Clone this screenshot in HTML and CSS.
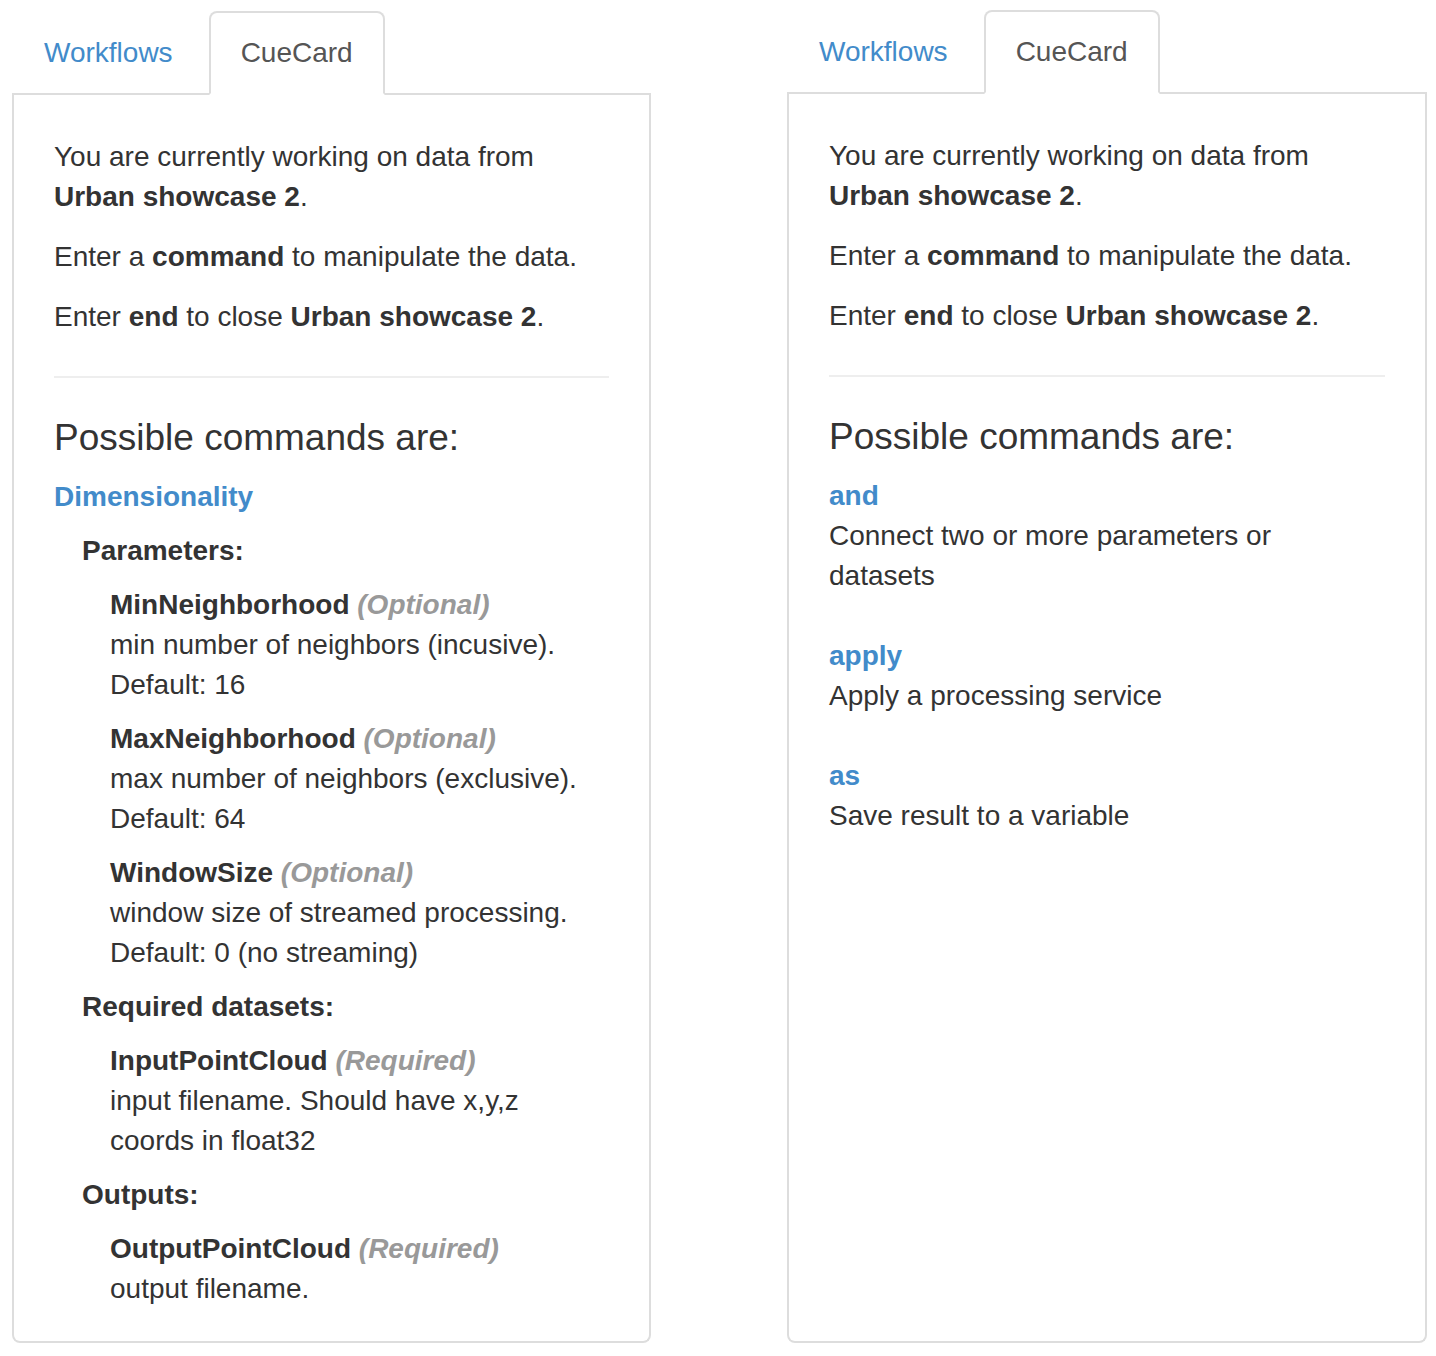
FILE: index.html
```html
<!DOCTYPE html>
<html lang="en">
<head>
<meta charset="utf-8">
<title>CueCard</title>
<link rel="stylesheet" href="styles.css">
</head>
<body>
<div class="page">
  <div class="col">
    <ul class="tabs">
      <li class="tab"><a href="#">Workflows</a></li>
      <li class="tab active"><a href="#">CueCard</a></li>
    </ul>
    <div class="panel panel-left">
      <p>You are currently working on data from <b>Urban showcase 2</b>.</p>
      <p>Enter a <b>command</b> to manipulate the data.</p>
      <p>Enter <b>end</b> to close <b>Urban showcase 2</b>.</p>
      <hr>
      <h3>Possible commands are:</h3>
      <div class="cmds">
        <a class="cmd" href="#">Dimensionality</a>
        <div class="group">
          <div class="group-title">Parameters:</div>
          <div class="param">
            <div><b>MinNeighborhood</b> <i class="tag">(Optional)</i></div>
            <div>min number of neighbors (incusive).</div>
            <div>Default: 16</div>
          </div>
          <div class="param">
            <div><b>MaxNeighborhood</b> <i class="tag">(Optional)</i></div>
            <div>max number of neighbors (exclusive).</div>
            <div>Default: 64</div>
          </div>
          <div class="param">
            <div><b>WindowSize</b> <i class="tag">(Optional)</i></div>
            <div>window size of streamed processing.</div>
            <div>Default: 0 (no streaming)</div>
          </div>
        </div>
        <div class="group">
          <div class="group-title">Required datasets:</div>
          <div class="param">
            <div><b>InputPointCloud</b> <i class="tag">(Required)</i></div>
            <div>input filename. Should have x,y,z<br>coords in float32</div>
          </div>
        </div>
        <div class="group">
          <div class="group-title">Outputs:</div>
          <div class="param">
            <div><b>OutputPointCloud</b> <i class="tag">(Required)</i></div>
            <div>output filename.</div>
          </div>
        </div>
      </div>
    </div>
  </div>
  <div class="col col-shift">
    <ul class="tabs">
      <li class="tab"><a href="#">Workflows</a></li>
      <li class="tab active"><a href="#">CueCard</a></li>
    </ul>
    <div class="panel">
      <p>You are currently working on data from <b>Urban showcase 2</b>.</p>
      <p>Enter a <b>command</b> to manipulate the data.</p>
      <p>Enter <b>end</b> to close <b>Urban showcase 2</b>.</p>
      <hr>
      <h3>Possible commands are:</h3>
      <div class="list">
        <div class="entry">
          <a class="cmd" href="#">and</a>
          <div>Connect two or more parameters or<br>datasets</div>
        </div>
        <div class="entry">
          <a class="cmd" href="#">apply</a>
          <div>Apply a processing service</div>
        </div>
        <div class="entry">
          <a class="cmd" href="#">as</a>
          <div>Save result to a variable</div>
        </div>
      </div>
    </div>
  </div>
</div>
</body>
</html>
```

FILE: styles.css
```css
* { box-sizing: border-box; }
html, body { margin: 0; padding: 0; background: #fff; }
body {
  font-family: "Liberation Sans", Arial, Helvetica, sans-serif;
  font-size: 28px;
  line-height: 40px;
  color: #333;
}
.page {
  display: grid;
  grid-template-columns: 639px 639px;
  column-gap: 137px;
  padding: 11px 0 0 12px;
  height: 1343px;
}
.col {
  display: flex;
  flex-direction: column;
}
.col-shift { margin-top: -1px; margin-left: -1px; }
.tabs {
  list-style: none;
  margin: 0;
  padding: 0;
  display: flex;
  border-bottom: 2px solid #ddd;
}
.tab { margin-bottom: -2px; }
.tab a {
  display: block;
  padding: 20px 30px;
  margin-right: 4px;
  line-height: 40px;
  border: 2px solid transparent;
  border-radius: 8px 8px 0 0;
  color: #428bca;
  text-decoration: none;
}
.tab.active a {
  color: #555;
  background: #fff;
  border-color: #ddd;
  border-bottom-color: transparent;
}
.panel {
  flex: 1;
  border: 2px solid #ddd;
  border-top: none;
  border-radius: 0 0 8px 8px;
  padding: 42px 40px 32px;
}
.panel p { margin: 0 0 20px; }
b { font-weight: 700; }
hr {
  margin: 39px 0 0;
  border: 0;
  border-top: 2px solid #eee;
  height: 0;
}
h3 {
  font-size: 37px;
  font-weight: 500;
  line-height: 53px;
  margin: 33px 0 13px;
  color: #333;
}
.cmd {
  display: block;
  color: #428bca;
  font-weight: 700;
  text-decoration: none;
}
.cmds { display: flex; flex-direction: column; gap: 14px; }
.group { display: flex; flex-direction: column; gap: 14px; padding-left: 28px; }
.group-title { font-weight: 700; }
.param { padding-left: 28px; }
.tag { color: #999; font-weight: 700; font-style: italic; }
.list { display: flex; flex-direction: column; gap: 40px; }
```
